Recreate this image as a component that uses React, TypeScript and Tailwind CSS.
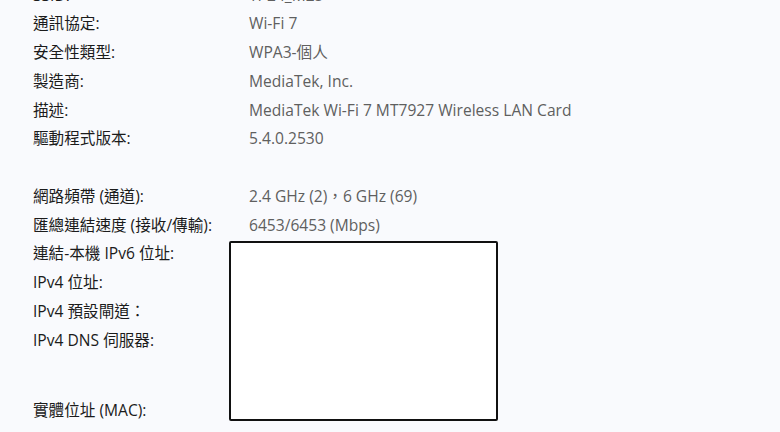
const rows: { label: string; value: string }[] = [
  { label: "SSID:", value: "TP24_M25" },
  { label: "通訊協定:", value: "Wi-Fi 7" },
  { label: "安全性類型:", value: "WPA3-個人" },
  { label: "製造商:", value: "MediaTek, Inc." },
  { label: "描述:", value: "MediaTek Wi-Fi 7 MT7927 Wireless LAN Card" },
  { label: "驅動程式版本:", value: "5.4.0.2530" },
];

const rows2: { label: string; value: string }[] = [
  { label: "網路頻帶 (通道):", value: "2.4 GHz (2)，6 GHz (69)" },
  { label: "匯總連結速度 (接收/傳輸):", value: "6453/6453 (Mbps)" },
  { label: "連結-本機 IPv6 位址:", value: "" },
  { label: "IPv4 位址:", value: "" },
  { label: "IPv4 預設閘道：", value: "" },
  { label: "IPv4 DNS 伺服器:", value: "" },
];

function Row({ label, value }: { label: string; value: string }) {
  return (
    <div className="flex items-center h-[28.75px]">
      <div className="w-[249px] pl-[33px] text-[#1b1b1b]">{label}</div>
      <div className="text-[#5f5f5f]">{value}</div>
    </div>
  );
}

export default function App() {
  return (
    <div
      className="relative w-[780px] h-[432px] overflow-hidden bg-[#f9fafd] text-[15.6px] leading-none"
      style={{ fontFamily: '"Segoe UI", "Open Sans", "Noto Sans CJK TC", sans-serif' }}
    >
      <div className="flex flex-col -mt-[19px]">
        {rows.map((r) => (
          <Row key={r.label} {...r} />
        ))}
        <div className="h-[28.75px]" />
        {rows2.map((r) => (
          <Row key={r.label} {...r} />
        ))}
        <div className="h-[42px]" />
        <Row label="實體位址 (MAC):" value="" />
      </div>

      {/* redaction box over the address values */}
      <div className="absolute left-[229px] top-[241px] w-[269px] h-[180px] bg-white border-[2.5px] border-[#111] rounded-[2px]" />
    </div>
  );
}
